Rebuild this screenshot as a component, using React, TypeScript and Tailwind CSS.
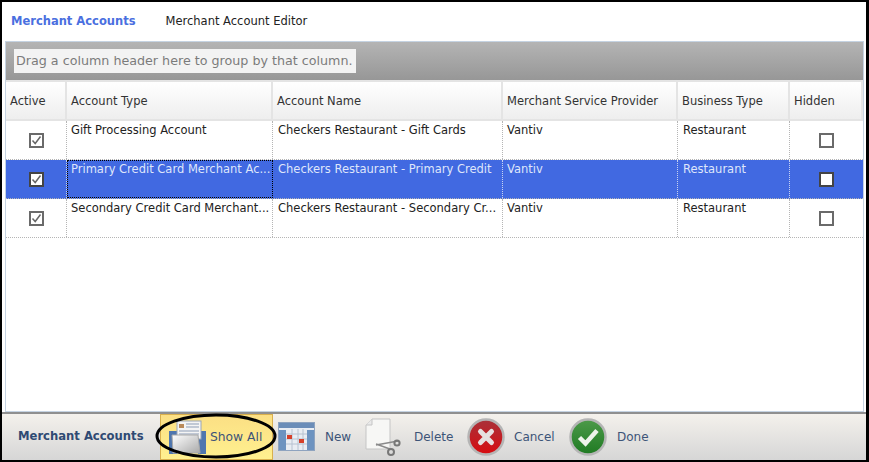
import React from 'react';

const font = "[font-family:'DejaVu_Sans',sans-serif]";

const columns = [
  { label: 'Active', width: 'w-[61px]' },
  { label: 'Account Type', width: 'w-[206px]' },
  { label: 'Account Name', width: 'w-[230px]' },
  { label: 'Merchant Service Provider', width: 'w-[175px]' },
  { label: 'Business Type', width: 'w-[112px]' },
  { label: 'Hidden', width: 'flex-1' },
];

const rows = [
  { type: 'Gift Processing Account', name: 'Checkers Restaurant - Gift Cards', selected: false },
  { type: 'Primary Credit Card Merchant Ac...', name: 'Checkers Restaurant - Primary Credit', selected: true },
  { type: 'Secondary Credit Card Merchant...', name: 'Checkers Restaurant - Secondary Cr...', selected: false },
];

const CheckBox = ({ checked, selected }: { checked: boolean; selected: boolean }) => (
  <div className={`flex h-[15px] w-[15px] items-center justify-center border-2 bg-white ${selected ? 'border-[#444]' : 'border-[#6a6a6a]'}`}>
    {checked && (
      <svg width="11" height="11" viewBox="0 0 11 11" fill="none">
        <path d="M1.5 5.5 L4.2 8.5 L9.5 1.5" stroke="#666" strokeWidth="1.5" />
      </svg>
    )}
  </div>
);

const Cell = ({ width, pad, selected, focused, children }: { width: string; pad: string; selected: boolean; focused?: boolean; children: React.ReactNode }) => (
  <div
    className={`${width} ${pad} min-w-0 overflow-hidden whitespace-nowrap border-r border-dotted text-[11.5px] leading-[14px] ${
      selected ? 'border-[#c8d2f0] text-[#dfe6fb]' : 'border-[#b5b5b5] text-[#222]'
    } ${focused ? 'border border-dotted border-black pt-[1px]' : 'pt-[2px]'}`}
  >
    {children}
  </div>
);

const ShowAllIcon = () => (
  <svg width="40" height="38" viewBox="0 0 40 38" className="shrink-0">
    <rect x="2" y="13" width="8" height="23" fill="#4f76ae" />
    <rect x="31" y="13" width="8" height="23" fill="#4f76ae" />
    <rect x="10" y="3" width="24" height="18" fill="#f4f4f4" stroke="#9aa6b8" />
    <rect x="12" y="6" width="5" height="4" fill="#b98a5a" />
    <path d="M19 6h13M19 9h13M12 13h20M12 16h20" stroke="#8d9db6" />
    <path d="M5 17 H31 L33 35 H6 Z" fill="url(#folder)" stroke="#a8a8a8" />
    <defs>
      <linearGradient id="folder" x1="0" y1="0" x2="1" y2="1">
        <stop offset="0" stopColor="#ffffff" />
        <stop offset="1" stopColor="#a9a9a9" />
      </linearGradient>
    </defs>
  </svg>
);

const CalendarIcon = () => (
  <svg width="38" height="30" viewBox="0 0 38 30" className="shrink-0">
    <rect x="0.5" y="0.5" width="36" height="28" fill="#e9edf3" stroke="#8ea3bf" />
    <rect x="1" y="1" width="35" height="5" fill="#6b8db8" />
    <rect x="1" y="8" width="7" height="20" fill="#6d93c0" />
    <rect x="29" y="8" width="7" height="20" fill="#6d93c0" />
    <path d="M8 12h21M8 17h21M8 22h21M14 7v21M20 7v21M25 7v21" stroke="#b7c2d1" />
    <rect x="9" y="13" width="5" height="4" fill="#d6402a" />
    <rect x="21" y="17" width="5" height="4" fill="#d6402a" />
  </svg>
);

const DeleteIcon = () => (
  <svg width="36" height="38" viewBox="0 0 36 38" className="shrink-0">
    <path d="M7 1 H25 V31 H1 V7 Z" fill="#f7f7f5" stroke="#c5c5c5" />
    <path d="M7 1 V7 H1" fill="#e9e9e9" stroke="#c5c5c5" />
    <path d="M11 27 L33 23 M11 26 L25 31" stroke="#8a8a8a" strokeWidth="1.5" />
    <circle cx="32" cy="25" r="2.6" fill="none" stroke="#777" strokeWidth="2" />
    <circle cx="26" cy="34" r="3" fill="none" stroke="#777" strokeWidth="2" />
  </svg>
);

const CancelIcon = () => (
  <svg width="38" height="38" viewBox="0 0 38 38" className="shrink-0">
    <defs>
      <linearGradient id="red" x1="0" y1="0" x2="0" y2="1">
        <stop offset="0" stopColor="#a8323a" />
        <stop offset="1" stopColor="#d80c10" />
      </linearGradient>
    </defs>
    <circle cx="19" cy="19" r="17.5" fill="url(#red)" stroke="#b5b5b5" strokeWidth="2.5" />
    <path d="M13.5 13.5 L24.5 24.5 M24.5 13.5 L13.5 24.5" stroke="#e6e0e0" strokeWidth="5" strokeLinecap="round" />
  </svg>
);

const DoneIcon = () => (
  <svg width="38" height="38" viewBox="0 0 38 38" className="shrink-0">
    <defs>
      <linearGradient id="green" x1="0" y1="0" x2="0" y2="1">
        <stop offset="0" stopColor="#4d9a4a" />
        <stop offset="1" stopColor="#1f7a22" />
      </linearGradient>
    </defs>
    <circle cx="19" cy="19" r="17.5" fill="url(#green)" stroke="#b5b5b5" strokeWidth="2.5" />
    <path d="M10.5 19.5 L16.5 25.5 L28 12.5" fill="none" stroke="#eef3ea" strokeWidth="4.5" />
  </svg>
);

const ToolButton = ({ icon, label, gap, width }: { icon: React.ReactNode; label: string; gap: string; width: string }) => (
  <div className={`flex h-full items-center ${gap} ${width}`}>
    {icon}
    <span className="text-[12px] text-[#3d5478]">{label}</span>
  </div>
);

export default function App() {
  return (
    <div className={`${font} h-[462px] w-[869px] overflow-hidden bg-black pl-[2px] pr-[3px] pt-[2px] pb-[2px]`}>
      <div className="flex h-[458px] flex-col bg-white">
        {/* Tabs */}
        <div className="flex h-[39px] shrink-0 items-center">
          <span className="ml-[9px] text-[11.5px] font-bold text-[#4a6fe0]">Merchant Accounts</span>
          <span className="ml-[30px] text-[11.5px] text-[#222]">Merchant Account Editor</span>
        </div>

        {/* Grid */}
        <div className="ml-[3px] mr-[2px] flex h-[371px] shrink-0 flex-col border border-[#c5d3e2] bg-white">
          <div className="flex h-[38px] shrink-0 items-center bg-gradient-to-b from-[#b4b4b4] to-[#979797] pl-[8px]">
            <div className="flex h-[24px] items-center bg-[#f3f3f3] pl-[2px] pr-[3px] text-[12.7px] text-[#7b7b7b]">
              Drag a column header here to group by that column.
            </div>
          </div>
          <div className="flex h-[41px] shrink-0 border-y-2 border-[#e4e4e4] bg-gradient-to-b from-white to-[#eeeeee]">
            {columns.map((c) => (
              <div key={c.label} className={`${c.width} flex items-center border-r-2 border-[#e4e4e4] pl-[4px] pt-[2px] text-[11.5px] text-[#333]`}>
                {c.label}
              </div>
            ))}
          </div>
          {rows.map((r) => (
            <div key={r.type} className={`flex h-[39px] shrink-0 border-b border-dotted border-[#b5b5b5] ${r.selected ? 'bg-[#4169e1]' : 'bg-white'}`}>
              <div className={`flex w-[61px] items-center justify-center border-r border-dotted ${r.selected ? 'border-[#c8d2f0]' : 'border-[#b5b5b5]'}`}>
                <CheckBox checked selected={r.selected} />
              </div>
              <Cell width="w-[206px]" pad={r.selected ? 'pl-[3px]' : 'pl-[4px]'} selected={r.selected} focused={r.selected}>{r.type}</Cell>
              <Cell width="w-[230px]" pad="pl-[5px]" selected={r.selected}>{r.name}</Cell>
              <Cell width="w-[175px]" pad="pl-[4px]" selected={r.selected}>Vantiv</Cell>
              <Cell width="w-[112px]" pad="pl-[5px]" selected={r.selected}>Restaurant</Cell>
              <div className="flex flex-1 items-center justify-center">
                <CheckBox checked={false} selected={r.selected} />
              </div>
            </div>
          ))}
        </div>

        {/* Toolbar */}
        <div className="relative mt-auto flex h-[48px] shrink-0 items-center border-t-2 border-[#8f8f8f] bg-gradient-to-b from-[#f4f1ec] to-[#d6d6d6]">
          <span className="ml-[16px] w-[142px] text-[11.6px] font-bold text-[#2f4a73]">Merchant Accounts</span>
          <div className="flex h-full w-[113px] items-center gap-[3px] border border-[#d9b04e] bg-gradient-to-b from-[#fbdf84] to-[#fff08f] pl-[6px]">
            <ShowAllIcon />
            <span className="text-[12.3px] text-[#3d5478]">Show All</span>
          </div>
          <div className="ml-[5px]">
            <ToolButton icon={<CalendarIcon />} label="New" gap="gap-[9px]" width="w-[87px]" />
          </div>
          <ToolButton icon={<DeleteIcon />} label="Delete" gap="gap-[13px]" width="w-[102px]" />
          <ToolButton icon={<CancelIcon />} label="Cancel" gap="gap-[9px]" width="w-[102px]" />
          <ToolButton icon={<DoneIcon />} label="Done" gap="gap-[10px]" width="w-[90px]" />
          {/* hand-drawn highlight round Show All */}
          <svg width="122" height="48" viewBox="0 0 122 48" className="absolute left-[153px] top-[-2px]" fill="none">
            <ellipse cx="61" cy="24" rx="59" ry="21" stroke="#000" strokeWidth="3" />
          </svg>
        </div>
      </div>
    </div>
  );
}
